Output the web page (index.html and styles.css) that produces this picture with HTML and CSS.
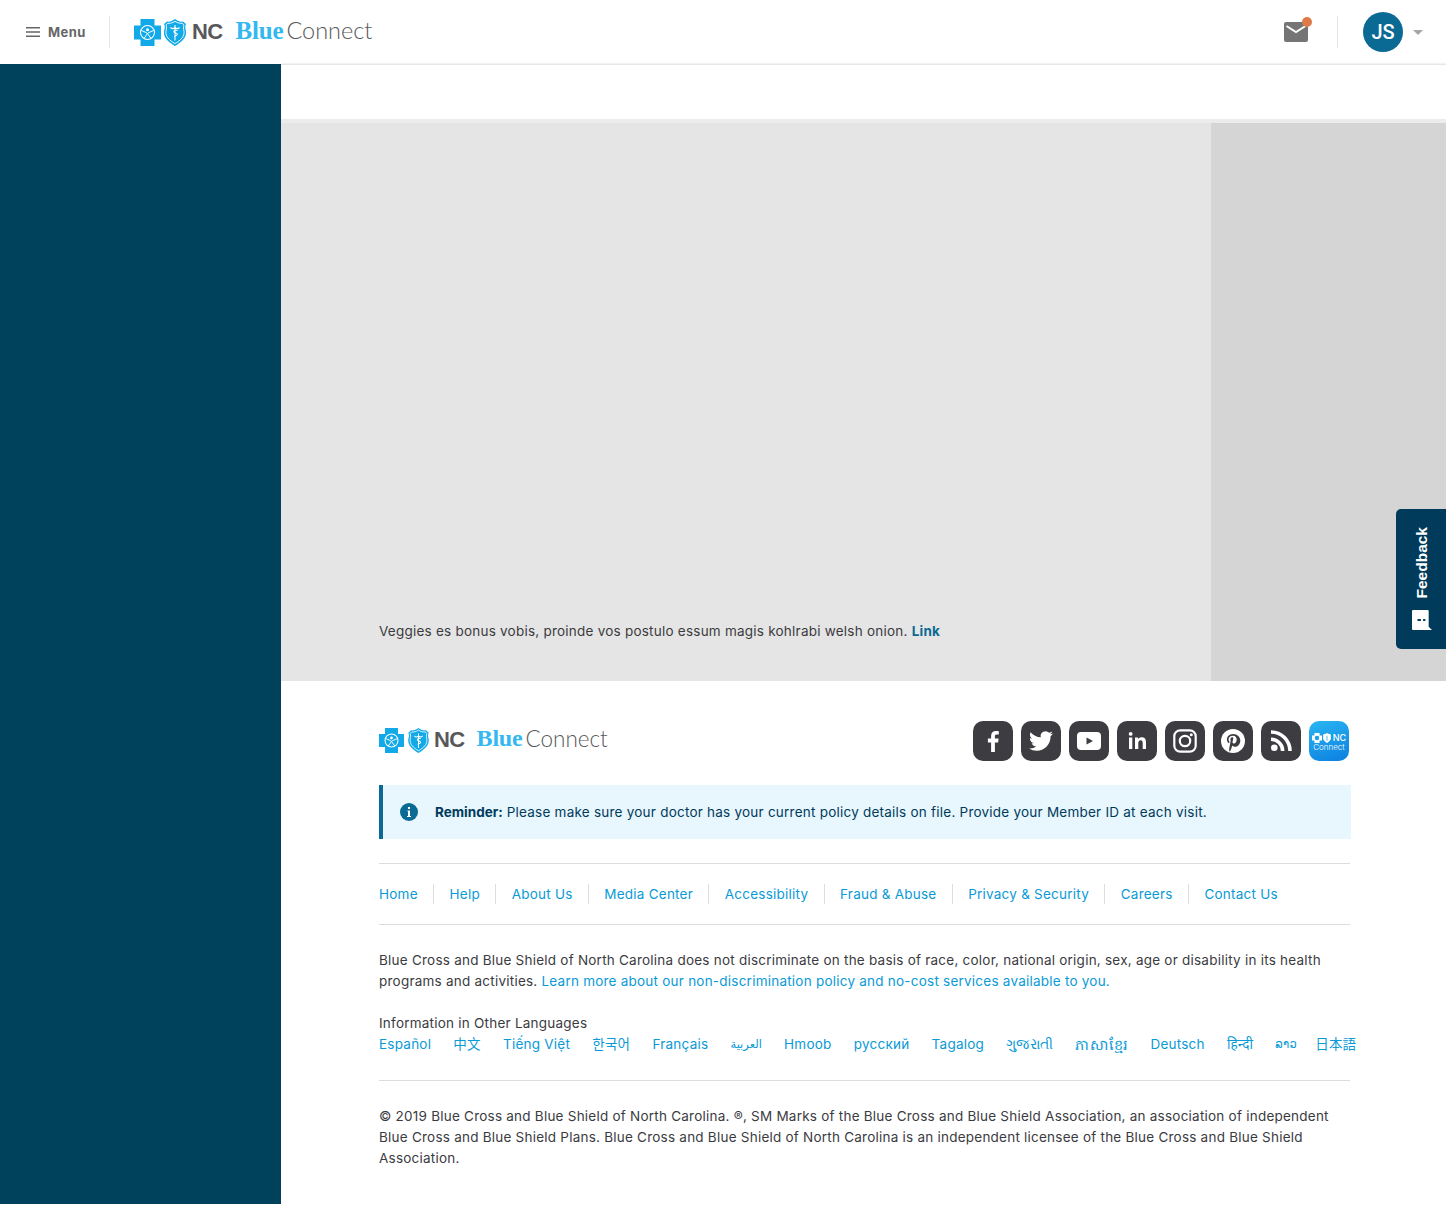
FILE: index.html
```html
<!DOCTYPE html>
<html lang="en">

<head>
    <meta charset="UTF-8">
    <meta name="viewport" content="width=device-width, initial-scale=1.0">
    <title>Blue Connect</title>
    <link rel="stylesheet" href="styles.css">
</head>

<body>
    <svg class="defs" width="0" height="0">
        <symbol id="bcbs-cross" viewBox="0 0 27 27">
            <path fill="#12a9e8" d="M6.500 0h14v6.500H27v14h-6.500V27h-14v-6.500H0v-14h6.500z" />
            <circle cx="13.500" cy="13.500" r="7" fill="none" stroke="#fff" stroke-width="1.100" />
            <circle cx="13.500" cy="10.800" r="1.500" fill="#fff" />
            <path fill="none" stroke="#fff" stroke-width="1" d="M7.500 11.500l4.500 2 1.500 1 1.500-1 4.500-2M13.500 14.500l-3.500 5M13.500 14.500l3.500 5" />
        </symbol>
        <symbol id="bcbs-shield" viewBox="0 0 22 27">
            <path fill="#12a9e8" d="M11 0c2.500 2 5.500 3 8 2.500L22 5c-1 2-1 4 0 7 1 6-4 11-11 15C4 23-1 18 0 12c1-3 1-5 0-7l3-2.500C5.500 3 8.500 2 11 0z" />
            <path fill="none" stroke="#fff" stroke-width=".9" d="M11 2.300c2.300 1.500 5 2.300 7.500 2L20 6c-.7 2-.6 4 0 6.300.7 5-3.200 9-9 12.300-5.800-3.300-9.700-7.300-9-12.300.6-2.300.7-4.300 0-6.300l1.500-1.700c2.500.3 5.200-.5 7.500-2z" />
            <path fill="none" stroke="#fff" stroke-width="1.100" d="M11 6v15.500M6.500 8.500c1.500 1.500 3 1.500 4.500 0 1.500 1.500 3 1.500 4.500 0M13.500 11.500c-2-.8-5 .5-3 2 1.500.8 3.500 1 2.500 2.500-.8 1-2.500.7-2.500 2" />
        </symbol>
    </svg>

    <header class="topbar">
        <a class="menu-btn" href="#">
            <svg width="14" height="10" viewBox="0 0 14 10">
                <path fill="#666" d="M0 0h14v1.400H0zM0 4.300h14v1.400H0zM0 8.600h14V10H0z" />
            </svg>
            <span>Menu</span>
        </a>
        <div class="brand brand-top">
            <svg class="brand-cross"><use href="#bcbs-cross" /></svg>
            <svg class="brand-shield"><use href="#bcbs-shield" /></svg>
            <span class="brand-nc">NC</span>
            <span class="brand-blue">Blue</span><span class="brand-connect">Connect</span>
        </div>
        <div class="topbar-right">
            <a class="mail" href="#">
                <svg width="24" height="20" viewBox="0 0 24 20">
                    <path fill="#757575" d="M2 0h20a2 2 0 0 1 2 2v16a2 2 0 0 1-2 2H2a2 2 0 0 1-2-2V2a2 2 0 0 1 2-2z" />
                    <path fill="none" stroke="#fff" stroke-width="2" d="M2.500 4l9.500 6 9.500-6" />
                </svg>
                <span class="mail-dot"></span>
            </a>
            <div class="user">
                <span class="avatar">JS</span>
                <span class="caret"></span>
            </div>
        </div>
    </header>

    <div class="layout">
        <aside class="sidebar"></aside>
        <main class="content">
            <div class="subbar"></div>
            <section class="hero">
                <div class="hero-main">
                    <p>Veggies es bonus vobis, proinde vos postulo essum magis kohlrabi welsh onion. <a href="#">Link</a></p>
                </div>
                <div class="hero-side"></div>
            </section>

            <footer class="footer">
                <div class="footer-top">
                    <div class="brand brand-small">
                        <svg class="brand-cross"><use href="#bcbs-cross" /></svg>
                        <svg class="brand-shield"><use href="#bcbs-shield" /></svg>
                        <span class="brand-nc">NC</span>
                        <span class="brand-blue">Blue</span><span class="brand-connect">Connect</span>
                    </div>
                    <div class="social">
                        <a href="#"><svg viewBox="0 0 40 40"><path fill="#fff" d="M21.900 31V21.400h3.200l.5-3.800h-3.700v-2.400c0-1.100.3-1.800 1.900-1.800h2V10.200c-.4-.1-1.500-.2-2.900-.2-2.900 0-4.800 1.700-4.800 4.900v2.700H14.900v3.800h3.200V31z" /></svg></a>
                        <a href="#"><svg viewBox="0 0 24 24" class="pad"><path fill="#fff" d="M23.950 4.570a10 10 0 0 1-2.820.77 4.960 4.960 0 0 0 2.160-2.720c-.95.550-2 .96-3.130 1.190a4.920 4.920 0 0 0-8.380 4.480C7.690 8.100 4.070 6.130 1.640 3.160a4.820 4.820 0 0 0-.67 2.480c0 1.710.87 3.210 2.190 4.100a4.900 4.900 0 0 1-2.230-.62v.06a4.920 4.920 0 0 0 3.950 4.830 5 5 0 0 1-2.210.08 4.940 4.940 0 0 0 4.600 3.420A9.870 9.870 0 0 1 0 19.540a14 14 0 0 0 7.560 2.210c9.050 0 14-7.500 14-13.980 0-.21 0-.42-.02-.63a9.940 9.940 0 0 0 2.410-2.570z" /></svg></a>
                        <a href="#"><svg viewBox="0 0 40 40"><path fill="#fff" d="M12 11h16a4 4 0 0 1 4 4v10a4 4 0 0 1-4 4H12a4 4 0 0 1-4-4V15a4 4 0 0 1 4-4z" /><path fill="#3c3c41" d="M17.500 16.500l6.500 3.500-6.500 3.500z" /></svg></a>
                        <a href="#"><svg viewBox="0 0 40 40"><path fill="#fff" d="M12 16.500h3.300V28H12zM13.650 11a1.900 1.900 0 1 1 0 3.800 1.900 1.900 0 0 1 0-3.800zM18 16.500h3.100v1.600c.5-.9 1.700-1.900 3.500-1.900 3.500 0 4.400 2.200 4.400 5.300V28h-3.300v-5.700c0-1.500-.2-3.100-2-3.100s-2.400 1.400-2.400 3V28H18z" /></svg></a>
                        <a href="#"><svg viewBox="0 0 40 40"><rect x="9.300" y="9.300" width="21.400" height="21.400" rx="6" fill="none" stroke="#fff" stroke-width="2.200" /><circle cx="20" cy="20" r="5.200" fill="none" stroke="#fff" stroke-width="2.200" /><circle cx="26.300" cy="13.700" r="1.500" fill="#fff" /></svg></a>
                        <a href="#"><svg viewBox="0 0 40 40"><circle cx="20" cy="20" r="12" fill="#fff" /><path fill="#3c3c41" d="M20.300 13c-4.200 0-6.400 2.800-6.400 5.600 0 1.400.6 3 1.800 3.500.5.200.5-.1.800-1.200 0-.2 0-.3-.2-.5-1.600-2-.4-5.700 3.700-5.700 5.200 0 4.300 7.800 1 7.800-1 0-1.700-.8-1.500-1.800.3-1.100.8-2.300.8-3.100 0-2-2.900-1.700-2.900.9 0 .8.300 1.300.3 1.300L16.300 27c-.2 1 0 2.600.1 3.500l.5.100c.7-1 1.300-2.600 1.600-3.500l.7-2.500c.4.700 1.400 1.200 2.500 1.200 3.300 0 5.600-3 5.600-6.400 0-3.200-3-6.400-7-6.400z" /></svg></a>
                        <a href="#"><svg viewBox="0 0 40 40"><circle cx="13.300" cy="26.700" r="3.300" fill="#fff" /><path fill="none" stroke="#fff" stroke-width="3.600" d="M10 18.300A11.700 11.700 0 0 1 21.700 30M10 11a19 19 0 0 1 19 19" /></svg></a>
                        <a class="app-icon" href="#">
                            <span class="app-row">
                                <svg class="app-cross" viewBox="0 0 27 27">
                                    <path fill="#fff" d="M6.500 0h14v6.500H27v14h-6.500V27h-14v-6.500H0v-14h6.500z" />
                                    <circle cx="13.500" cy="13.500" r="6" fill="#1d9eec" />
                                </svg>
                                <svg class="app-shield" viewBox="0 0 22 27">
                                    <path fill="#fff" d="M11 0c2.500 2 5.500 3 8 2.500L22 5c-1 2-1 4 0 7 1 6-4 11-11 15C4 23-1 18 0 12c1-3 1-5 0-7l3-2.500C5.500 3 8.500 2 11 0z" />
                                    <path fill="#1d9eec" d="M10 7h2v14h-2z" />
                                </svg>
                                <span class="app-nc">NC</span>
                            </span>
                            <span class="app-name">Connect</span>
                        </a>
                    </div>
                </div>

                <div class="reminder">
                    <svg width="18" height="18" viewBox="0 0 18 18">
                        <circle cx="9" cy="9" r="9" fill="#0b6a94" />
                        <path fill="#fff" d="M8 4h2v2H8zM7.500 7.500H10V13h1v1H7v-1h1V8.500h-.5z" />
                    </svg>
                    <p><b>Reminder:</b> Please make sure your doctor has your current policy details on file. Provide your Member ID at each visit.</p>
                </div>

                <nav class="links">
                    <a href="#">Home</a>
                    <a href="#">Help</a>
                    <a href="#">About Us</a>
                    <a href="#">Media Center</a>
                    <a href="#">Accessibility</a>
                    <a href="#">Fraud &amp; Abuse</a>
                    <a href="#">Privacy &amp; Security</a>
                    <a href="#">Careers</a>
                    <a href="#">Contact Us</a>
                </nav>

                <p class="notice">Blue Cross and Blue Shield of North Carolina does not discriminate on the basis of race, color, national origin, sex, age or disability in its health programs and activities. <a href="#">Learn more about our non-discrimination policy and no-cost services available to you.</a></p>

                <div class="languages">
                    <div class="lang-title">Information in Other Languages</div>
                    <div class="lang-list">
                        <a href="#">Español</a>
                        <a href="#" lang="zh">中文</a>
                        <a href="#">Tiếng Việt</a>
                        <a href="#" lang="ko">한국어</a>
                        <a href="#">Français</a>
                        <a href="#" class="lang-small" lang="ar">العربية</a>
                        <a href="#">Hmoob</a>
                        <a href="#">русский</a>
                        <a href="#">Tagalog</a>
                        <a href="#" lang="gu">ગુજરાતી</a>
                        <a href="#" class="lang-big" lang="km">ភាសាខ្មែរ</a>
                        <a href="#">Deutsch</a>
                        <a href="#" lang="hi">हिन्दी</a>
                        <a href="#" class="lang-small lang-tight" lang="lo">ລາວ</a>
                        <a href="#" lang="ja">日本語</a>
                    </div>
                </div>

                <p class="copyright">© 2019 Blue Cross and Blue Shield of North Carolina. ®, SM Marks of the Blue Cross and Blue Shield Association, an association of independent Blue Cross and Blue Shield Plans. Blue Cross and Blue Shield of North Carolina is an independent licensee of the Blue Cross and Blue Shield Association.</p>
            </footer>
        </main>
    </div>

    <a class="feedback" href="#">
        <span>Feedback</span>
        <svg width="20" height="20" viewBox="0 0 18 18">
            <path fill="#fff" d="M1 0h13a1 1 0 0 1 1 1v14l3 3H1a1 1 0 0 1-1-1V1a1 1 0 0 1 1-1z" />
            <path fill="#003b5c" d="M5 8h3v2H5zM10 8h2v2h-2z" />
        </svg>
    </a>
</body>

</html>
```
FILE: styles.css
```css
html,
body {
    margin: 0;
    padding: 0;
    background: #fff;
}

body {
    width: 1446px;
    height: 1204px;
    font-family: Inter, 'Noto Sans', 'Noto Sans CJK SC', 'DejaVu Sans', sans-serif;
    font-size: 13.5px;
    letter-spacing: .23px;
    line-height: 21px;
    color: #3b3b3f;
    position: relative;
}

a {
    color: #0a9ad6;
    text-decoration: none;
}

p {
    margin: 0;
}

.defs {
    position: absolute;
}

/* top bar */
.topbar {
    height: 64px;
    display: flex;
    align-items: center;
    box-sizing: border-box;
    padding-left: 26px;
    background: #fff;
}

.menu-btn {
    display: flex;
    align-items: center;
    gap: 8px;
    width: 83px;
    height: 32px;
    border-right: 1px solid #e6e6e6;
    color: #666;
    font-size: 13px;
    font-weight: 700;
    letter-spacing: .4px;
}

.brand {
    display: flex;
    align-items: center;
    letter-spacing: 0;
}

.brand-top {
    margin-left: 24px;
}

.brand-cross {
    width: 27px;
    height: 27px;
}

.brand-shield {
    width: 22px;
    height: 27px;
    margin-left: 3px;
}

.brand-nc {
    margin-left: 6px;
    margin-right: 13px;
    margin-bottom: 2px;
    font-family: 'Liberation Sans', sans-serif;
    font-size: 22px;
    font-weight: 700;
    letter-spacing: -.6px;
    color: #58585b;
}

.brand-blue {
    margin-bottom: 4px;
    font-family: 'Liberation Serif', serif;
    font-size: 25px;
    font-weight: 700;
    letter-spacing: -.2px;
    color: #35b8f0;
}

.brand-connect {
    margin-left: 3px;
    margin-bottom: 4px;
    font-family: Lato, sans-serif;
    font-size: 23.5px;
    font-weight: 300;
    color: #58585b;
}

.brand-small {
    margin-bottom: 2px;
}

.brand-small .brand-cross {
    width: 25px;
    height: 25px;
}

.brand-small .brand-shield {
    width: 21px;
    height: 25px;
    margin-left: 4px;
}

.brand-small .brand-nc {
    margin-left: 5px;
    font-size: 22px;
    margin-right: 12px;
}

.brand-small .brand-blue {
    font-size: 24px;
}

.brand-small .brand-connect {
    font-size: 22.5px;
}

.topbar-right {
    margin-left: auto;
    display: flex;
    align-items: center;
}

.mail {
    position: relative;
    display: block;
    height: 20px;
    margin-right: 29px;
    line-height: 0;
}

.mail-dot {
    position: absolute;
    right: -4px;
    top: -5px;
    width: 10px;
    height: 10px;
    border-radius: 50%;
    background: #dd7a48;
}

.user {
    display: flex;
    align-items: center;
    height: 32px;
    padding-left: 25px;
    padding-right: 23px;
    border-left: 1px solid #e6e6e6;
}

.avatar {
    width: 40px;
    height: 40px;
    border-radius: 50%;
    background: #0b6a94;
    color: #fff;
    font-family: Roboto, sans-serif;
    font-size: 20px;
    font-weight: 500;
    letter-spacing: 0;
    line-height: 40px;
    text-align: center;
}

.caret {
    margin-left: 10px;
    border-left: 5px solid transparent;
    border-right: 5px solid transparent;
    border-top: 5px solid #a5a5a5;
}

/* body columns */
.layout {
    display: flex;
    height: 1140px;
}

.sidebar {
    width: 281px;
    flex: none;
    background: #00415c;
}

.content {
    flex: 1;
    min-width: 0;
    border-top: 1px solid #e6e6e6;
    box-sizing: border-box;
    box-shadow: 1px 0 2px rgba(0, 0, 0, .15);
}

.subbar {
    height: 54px;
    border-bottom: 4px solid #ececec;
    background: #fff;
}

.hero {
    display: flex;
    height: 558px;
}

.hero-main {
    flex: 1;
    box-sizing: border-box;
    display: flex;
    align-items: flex-end;
    padding: 0 0 39px 98px;
    background: #e5e5e5;
}

.hero-main a {
    color: #0b6a94;
    font-weight: 700;
}

.hero-side {
    width: 235px;
    background: #d5d5d5;
}

/* footer */
.footer {
    padding: 40px 96px 0 98px;
}

.footer-top {
    display: flex;
    justify-content: space-between;
    align-items: center;
    height: 40px;
    padding-right: 1px;
}

.social {
    display: flex;
    gap: 8px;
}

.social a {
    display: block;
    width: 40px;
    height: 40px;
    border-radius: 10px;
    background: #3c3c41;
}

.social svg {
    display: block;
    width: 40px;
    height: 40px;
}

.social svg.pad {
    width: 24px;
    height: 24px;
    padding: 8px;
}

.social a.app-icon {
    background: linear-gradient(160deg, #29b6f2, #0c7fe0);
    color: #fff;
    overflow: hidden;
    text-align: center;
    letter-spacing: 0;
}

.app-row {
    display: flex;
    align-items: center;
    justify-content: center;
    gap: 1px;
    margin-top: 10px;
    height: 13px;
}

.social svg.app-cross {
    width: 10px;
    height: 10px;
}

.social svg.app-shield {
    width: 8px;
    height: 10px;
}

.app-nc {
    margin-left: 1px;
    font-size: 9px;
    line-height: 13px;
    font-weight: 500;
}

.app-name {
    display: block;
    margin-top: -2px;
    font-size: 8px;
    line-height: 11px;
    font-weight: 300;
}

.reminder {
    display: flex;
    align-items: center;
    gap: 17px;
    height: 54px;
    box-sizing: border-box;
    margin-top: 24px;
    margin-right: -1px;
    padding-left: 17px;
    border-left: 4px solid #0b6a94;
    background: #e8f6fd;
    color: #003b5c;
}

.reminder b {
    letter-spacing: 0;
}

.links {
    display: flex;
    align-items: center;
    height: 60px;
    margin-top: 24px;
    border-top: 1px solid #ddd;
    border-bottom: 1px solid #ddd;
}

.links a {
    padding: 0 15.4px;
    border-left: 1px solid #ddd;
    line-height: 20px;
}

.links a:first-child {
    padding-left: 0;
    border-left: 0;
}

.notice {
    margin-top: 25px;
}

.languages {
    margin-top: 21px;
}

.lang-list {
    display: flex;
    gap: 22.2px;
    white-space: nowrap;
}

.lang-small {
    font-size: 11.5px;
}

.lang-big {
    font-size: 14.5px;
}

.lang-tight {
    margin-right: -4px;
}

.copyright {
    margin-top: 25px;
    padding-top: 25px;
    border-top: 1px solid #ddd;
}

/* feedback tab */
.feedback {
    position: absolute;
    right: 0;
    top: 509px;
    width: 50px;
    height: 140px;
    box-sizing: border-box;
    padding: 18px 0 19px 1px;
    display: flex;
    flex-direction: column;
    align-items: center;
    justify-content: space-between;
    border-radius: 5px 0 0 5px;
    background: #003b5c;
    color: #fff;
    font-family: 'Liberation Sans', sans-serif;
    font-weight: 700;
    font-size: 15.5px;
    letter-spacing: 0;
}

.feedback span {
    writing-mode: vertical-rl;
    transform: rotate(180deg);
}
```
